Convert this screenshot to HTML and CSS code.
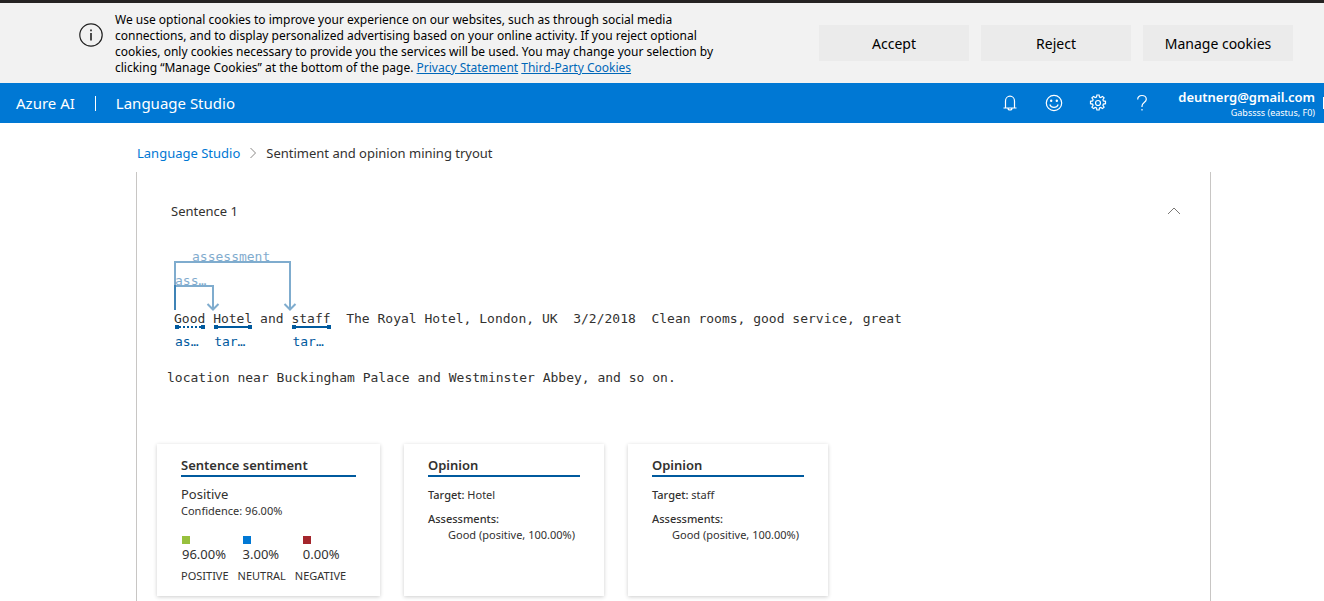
FILE: index.html
```html
<!DOCTYPE html>
<html lang="en">
<head>
<meta charset="utf-8">
<meta name="viewport" content="width=device-width, initial-scale=1">
<title>Language Studio - Sentiment and opinion mining tryout</title>
<link rel="stylesheet" href="styles.css">
</head>
<body>
<section class="cookie-banner" aria-label="Cookie consent">
  <svg class="cookie-icon" viewBox="0 0 24 24" aria-hidden="true"><circle cx="12" cy="12" r="11.2" fill="none" stroke="#222" stroke-width="1.2"/><path d="M11.2 10h1.6v7.5h-1.6zM11.2 6.4h1.6v1.8h-1.6z" fill="#222"/></svg>
  <p class="cookie-text">We use optional cookies to improve your experience on our websites, such as through social media<br>connections, and to display personalized advertising based on your online activity. If you reject optional<br>cookies, only cookies necessary to provide you the services will be used. You may change your selection by<br>clicking “Manage Cookies” at the bottom of the page. <a href="#privacy">Privacy Statement</a> <a href="#cookies">Third-Party Cookies</a></p>
  <div class="cookie-actions">
    <button type="button">Accept</button>
    <button type="button">Reject</button>
    <button type="button">Manage cookies</button>
  </div>
</section>
<header class="topbar">
  <a class="brand" href="#azure">Azure AI</a>
  <span class="divider" aria-hidden="true"></span>
  <a class="brand" href="#studio">Language Studio</a>
  <nav class="tools" aria-label="Tools">
    <button type="button" aria-label="Notifications"><svg viewBox="0 0 18 18"><path d="M4.500 14V7a4.500 4.800 0 0 1 9 0v7M2.500 14h13M7 14a2 2 0 0 0 4 0"/></svg></button>
    <button type="button" aria-label="Feedback"><svg viewBox="0 0 18 18"><circle cx="9" cy="9" r="7.700"/><path d="M4.800 10.500a4.500 4.500 0 0 0 8.400 0"/><circle cx="6.200" cy="6.800" r=".6" fill="#fff"/><circle cx="11.800" cy="6.800" r=".6" fill="#fff"/></svg></button>
    <button type="button" aria-label="Settings"><svg viewBox="0 0 18 18"><circle cx="9" cy="9" r="2.500"/><path d="M7.900 1h2.200l.4 2.100 1.200.5 1.800-1.200 1.600 1.500-1.200 1.800.5 1.200 2.100.4v2.400l-2.100.4-.5 1.200 1.200 1.800-1.600 1.500-1.800-1.200-1.200.5-.4 2.100H7.900l-.4-2.100-1.200-.5-1.800 1.200-1.600-1.500 1.200-1.800-.5-1.200-2.100-.4V7.300l2.100-.4.500-1.200-1.200-1.800 1.600-1.500 1.800 1.200 1.200-.5z"/></svg></button>
    <button type="button" aria-label="Help"><svg viewBox="0 0 18 18"><path d="M4.700 5.500C4.700 3 6.500 1.500 9 1.500S13.300 3 13.300 5.200C13.300 8.500 9 8.500 9 12v1M9 15v1.600"/></svg></button>
  </nav>
  <div class="account"><strong>deutnerg@gmail.com</strong><span>Gabssss (eastus, F0)</span></div>
  <div class="avatar"></div>
</header>
<main class="page">
  <nav class="crumbs" aria-label="Breadcrumb">
    <a href="#studio">Language Studio</a>
    <svg viewBox="0 0 8 12" aria-hidden="true"><path d="M1.500 1l5 5-5 5"/></svg>
    <span>Sentiment and opinion mining tryout</span>
  </nav>
  <section class="panel">
    <div class="panel-head">
      <h2>Sentence 1</h2>
      <button type="button" aria-label="Collapse"><svg viewBox="0 0 14 8"><path d="M1 7l6-6 6 6"/></svg></button>
    </div>
    <div class="sentence">
      <svg class="relations" viewBox="0 0 130 64" aria-hidden="true">
        <g fill="none" stroke="#005a9e" stroke-width="2" stroke-opacity=".5">
          <path d="M1 62V14h115v47M110.500 56l5.500 5.500 5.500-5.500"/>
          <path d="M1 62V38h38v23M33.500 56l5.500 5.500 5.500-5.500"/>
        </g>
      </svg>
      <span class="relation relation-far">assessment</span>
      <span class="relation relation-near">ass…</span>
      <p><span class="token dotted">Good<small>as…</small></span> <span class="token">Hotel<small>tar…</small></span> and <span class="token">staff<small>tar…</small></span>  The Royal Hotel, London, UK  3/2/2018  Clean rooms, good service, great location near Buckingham Palace and Westminster Abbey, and so on.</p>
    </div>
    <div class="cards">
      <article class="card sentiment">
        <h3>Sentence sentiment</h3>
        <p class="verdict">Positive</p>
        <p class="detail">Confidence: 96.00%</p>
        <ul class="scores">
          <li class="positive"><b>96.00%</b><span>POSITIVE</span></li>
          <li class="neutral"><b>3.00%</b><span>NEUTRAL</span></li>
          <li class="negative"><b>0.00%</b><span>NEGATIVE</span></li>
        </ul>
      </article>
      <article class="card">
        <h3>Opinion</h3>
        <p class="target"><strong>Target:</strong> Hotel</p>
        <p class="detail"><strong>Assessments:</strong></p>
        <p class="detail indent">Good (positive, 100.00%)</p>
      </article>
      <article class="card">
        <h3>Opinion</h3>
        <p class="target"><strong>Target:</strong> staff</p>
        <p class="detail"><strong>Assessments:</strong></p>
        <p class="detail indent">Good (positive, 100.00%)</p>
      </article>
    </div>
  </section>
</main>
</body>
</html>
```
FILE: styles.css
```css
* { box-sizing: border-box; }
body {
  margin: 0;
  min-height: 100vh;
  display: flex;
  flex-direction: column;
  overflow-x: hidden;
  background: #fff;
  color: #323130;
  font-family: "Noto Sans", "Open Sans", sans-serif;
  font-size: 13px;
}
h2, h3, p, ul { margin: 0; padding: 0; font-weight: 400; }
button { border: 0; padding: 0; background: none; font: inherit; color: inherit; }
a { text-decoration: none; }
svg { display: block; fill: none; }

.cookie-banner {
  display: flex;
  border-top: 3px solid #252323;
  background: #f2f2f2;
  color: #000;
  padding: 9px 31px 7px 79px;
}
.cookie-icon { width: 24px; height: 24px; margin: 11px 12px 0 0; flex: none; }
.cookie-text { flex: 1; font-size: 12px; line-height: 16px; white-space: nowrap; }
.cookie-text a { color: #0067b8; text-decoration: underline; }
.cookie-actions { display: flex; gap: 12px; padding-top: 13px; }
.cookie-actions button { width: 150px; height: 36px; background: #ebebeb; font-size: 14px; }

.topbar {
  display: flex;
  align-items: center;
  height: 40px;
  padding-left: 16px;
  background: #0078d4;
  color: #fff;
}
.brand { color: #fff; font-size: 15px; }
.divider { width: 1px; height: 15px; background: #fff; margin: 0 20px; }
.tools { display: flex; margin-left: auto; gap: 26px; }
.tools svg { width: 18px; height: 18px; stroke: #fff; stroke-width: 1.2; }
.account { display: flex; flex-direction: column; align-items: flex-end; margin-left: 27px; padding-top: 2px; }
.account strong { font-size: 13px; font-weight: 600; line-height: 18px; }
.account span { font-size: 9px; line-height: 14px; }
.avatar { width: 1px; height: 12px; margin-left: 8px; background: #fff; }

.page { flex: 1; display: flex; flex-direction: column; padding: 18px 113px 0 136px; }
.crumbs { display: flex; align-items: center; height: 24px; padding-left: 1px; }
.crumbs a { color: #0078d4; }
.crumbs svg { width: 8px; height: 12px; margin: 0 9px; stroke: #8a8886; }
.panel { flex: 1; margin-top: 7px; border: solid #c8c6c4; border-width: 0 1px; padding: 29px 20px 4px; }
.panel-head { display: flex; justify-content: space-between; padding: 0 9px 0 14px; height: 20px; align-items: center; }
.panel-head h2 { font-size: 13px; }
.panel-head svg { width: 14px; height: 8px; stroke: #797775; }

.sentence {
  position: relative;
  max-width: 760px;
  margin-top: 68px;
  padding-left: 10px;
  font-family: "DejaVu Sans Mono", monospace;
  font-size: 13px;
  line-height: 59px;
}
.sentence p { white-space: pre-wrap; text-indent: 7px; }
.relations { position: absolute; left: 17px; top: -41px; width: 130px; height: 64px; }
.relation { position: absolute; color: #005a9e; opacity: .5; line-height: 16px; }
.relation-far { left: 35px; top: -40px; }
.relation-near { left: 18px; top: -16px; }
.token { position: relative; display: inline-block; text-indent: 0; line-height: 16px; }
.token::before {
  content: "";
  position: absolute;
  left: 1px; right: 0; top: 15px;
  border-top: 2px solid #005a9e;
}
.token::after {
  content: "";
  position: absolute;
  left: 1px; right: 0; top: 14px;
  height: 4px;
  border: solid #005a9e;
  border-width: 0 4px;
}
.token.dotted::before { border-top-style: dotted; }
.token small { position: absolute; left: 1px; top: 23px; color: #005a9e; font-size: 13px; line-height: 16px; }

.cards { display: flex; gap: 24px; margin-top: 37px; }
.card {
  width: 200px;
  min-height: 152px;
  padding: 12px 24px 10px;
  background: #fff;
  box-shadow: 0 1px 4px rgba(0, 0, 0, .2);
}
.card.sentiment { width: 223px; }
.card h3 { border-bottom: 2px solid #005a9e; font-size: 13px; font-weight: 600; line-height: 19px; }
.card strong { font-weight: 500; }
.verdict { margin-top: 8px; line-height: 18px; }
.detail, .target { font-size: 11px; line-height: 16px; }
.target { margin: 10px 0 8px; }
.indent { padding-left: 20px; white-space: nowrap; }
.scores { display: flex; gap: 9px; margin-top: 17px; list-style: none; }
.scores li { display: flex; flex-direction: column; font-size: 11px; }
.scores li::before { content: ""; width: 8px; height: 8px; margin-left: 1px; background: #97c03d; }
.scores .neutral::before { background: #0078d4; margin-left: 5px; }
.scores .negative::before { background: #a4262c; margin-left: 8px; }
.scores b { font-size: 13px; font-weight: 400; line-height: 20px; margin-left: 1px; }
.scores .neutral b { margin-left: 5px; }
.scores .negative b { margin-left: 8px; }
.scores span { line-height: 16px; margin-top: 4px; }
```
